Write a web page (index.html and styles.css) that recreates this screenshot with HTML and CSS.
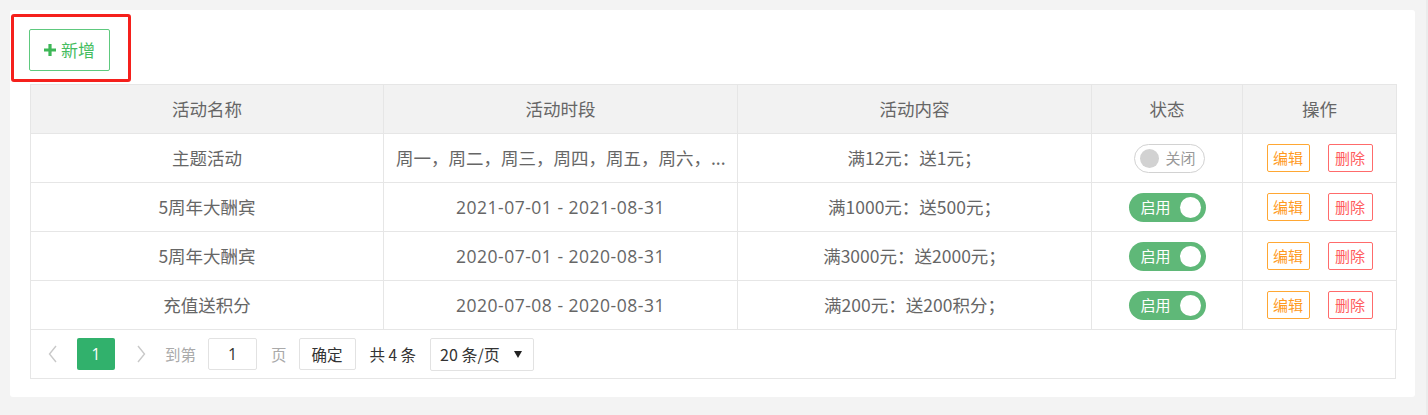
FILE: index.html
```html
<!DOCTYPE html>
<html lang="zh-CN">
<head>
<meta charset="utf-8">
<link rel="stylesheet" href="styles.css">
</head>
<body>
<div class="panel">
  <div class="toolbar">
    <div class="btn-add"><svg class="plus" viewBox="0 0 12 12" width="12" height="12"><path d="M4.4 0h3.2v4.4H12v3.2H7.6V12H4.4V7.6H0V4.4h4.4z" fill="#3db757"/></svg><span>新增</span></div>
  </div>
  <table class="grid">
    <colgroup>
      <col style="width:353px"><col style="width:354px"><col style="width:354px"><col style="width:151px"><col style="width:154px">
    </colgroup>
    <thead>
      <tr><th>活动名称</th><th>活动时段</th><th>活动内容</th><th>状态</th><th>操作</th></tr>
    </thead>
    <tbody>
      <tr>
        <td>主题活动</td>
        <td>周一，周二，周三，周四，周五，周六，...</td>
        <td>满12元：送1元；</td>
        <td><span class="switch off"><i class="knob"></i><em>关闭</em></span></td>
        <td><span class="op edit">编辑</span><span class="op del">删除</span></td>
      </tr>
      <tr>
        <td>5周年大酬宾</td>
        <td class="date">2021-07-01 - 2021-08-31</td>
        <td>满1000元：送500元；</td>
        <td><span class="switch on"><em>启用</em><i class="knob"></i></span></td>
        <td><span class="op edit">编辑</span><span class="op del">删除</span></td>
      </tr>
      <tr>
        <td>5周年大酬宾</td>
        <td class="date">2020-07-01 - 2020-08-31</td>
        <td>满3000元：送2000元；</td>
        <td><span class="switch on"><em>启用</em><i class="knob"></i></span></td>
        <td><span class="op edit">编辑</span><span class="op del">删除</span></td>
      </tr>
      <tr>
        <td>充值送积分</td>
        <td class="date">2020-07-08 - 2020-08-31</td>
        <td>满200元：送200积分；</td>
        <td><span class="switch on"><em>启用</em><i class="knob"></i></span></td>
        <td><span class="op edit">编辑</span><span class="op del">删除</span></td>
      </tr>
    </tbody>
  </table>
  <div class="pager">
    <span class="arrow"><svg viewBox="0 0 10 18" width="10" height="18"><path d="M8 1L1.5 9 8 17" fill="none" stroke="#c9c9c9" stroke-width="1.4"/></svg></span>
    <span class="cur">1</span>
    <span class="arrow next"><svg viewBox="0 0 10 18" width="10" height="18"><path d="M2 1l6.5 8L2 17" fill="none" stroke="#c9c9c9" stroke-width="1.4"/></svg></span>
    <span class="lbl">到第</span>
    <span class="inp">1</span>
    <span class="lbl ye">页</span>
    <span class="ok">确定</span>
    <span class="total">共 4 条</span>
    <span class="sel">20 条/页<svg viewBox="0 0 8 8" width="8" height="8"><path d="M0 1h8L4 8z" fill="#222"/></svg></span>
  </div>
</div>
<div class="scroll"></div>
</body>
</html>
```
FILE: styles.css
```css
html, body {
  margin: 0;
  padding: 0;
}
body {
  background: #f3f3f3;
  font-family: "Noto Sans CJK SC", "Noto Sans", sans-serif;
  font-size: 17.5px;
  color: #666;
  width: 1428px;
  height: 415px;
  overflow: hidden;
  position: relative;
}
.panel {
  margin: 10px 0 0 10px;
  width: 1405px;
  height: 387px;
  box-sizing: border-box;
  background: #fff;
  border-radius: 3px;
  padding: 0 19px 0 20px;
  overflow: hidden;
}
.toolbar {
  margin: 4px 0 2px -19px;
  width: 120px;
  height: 68px;
  box-sizing: border-box;
  border: 3px solid #f5201c;
  border-radius: 3px;
  padding: 12px 0 0 15px;
}
.btn-add {
  display: flex;
  align-items: center;
  justify-content: center;
  gap: 5px;
  width: 81px;
  height: 42px;
  box-sizing: border-box;
  border: 1px solid #5ec97e;
  border-radius: 2px;
  background: #fff;
  color: #45bd60;
  font-size: 17px;
  padding: 0 0 1px;
}
.plus {
  display: block;
}
.grid {
  border-collapse: collapse;
  table-layout: fixed;
  width: 1366px;
}
.grid th, .grid td {
  border: 1px solid #e6e6e6;
  height: 48px;
  padding: 0 12px;
  text-align: center;
  font-weight: normal;
  white-space: nowrap;
  overflow: hidden;
  line-height: 22px;
}
.grid th {
  background: #f2f2f2;
  color: #666;
}
.grid td.date {
  font-family: "Open Sans", "Noto Sans CJK SC", sans-serif;
  font-size: 17.5px;
  letter-spacing: 0.5px;
}
.switch {
  display: inline-flex;
  align-items: center;
  box-sizing: border-box;
  height: 29px;
  border-radius: 15px;
  vertical-align: middle;
}
.switch em {
  font-style: normal;
  font-size: 15px;
}
.switch.off {
  width: 71px;
  border: 1px solid #d2d2d2;
  padding: 0 6px 0 5px;
  gap: 7px;
  color: #999;
  margin-left: 4px;
}
.switch.off .knob {
  width: 19px;
  height: 19px;
  border-radius: 50%;
  background: #d2d2d2;
}
.switch.on {
  width: 77px;
  background: #5fb878;
  color: #fff;
  padding: 0 5px 0 12px;
  justify-content: space-between;
}
.switch.on .knob {
  width: 21px;
  height: 21px;
  border-radius: 50%;
  background: #fff;
}
.op {
  display: inline-flex;
  align-items: center;
  justify-content: center;
  box-sizing: border-box;
  height: 28px;
  padding: 0;
  border: 1px solid;
  border-radius: 2px;
  font-size: 15px;
  vertical-align: middle;
}
.op.edit {
  width: 43px;
  color: #ff9a1e;
  border-color: #ffa733;
}
.op.del {
  width: 45px;
  color: #ff5c5c;
  border-color: #ff6b6b;
  margin-left: 18px;
}
.pager {
  display: flex;
  align-items: center;
  height: 49px;
  box-sizing: border-box;
  width: 1366px;
  border: 1px solid #e6e6e6;
  border-top: none;
  padding: 0 0 0 17px;
  font-size: 15.5px;
}
.arrow {
  display: flex;
  align-items: center;
  width: 29px;
}
.arrow.next {
  width: 22px;
  justify-content: center;
  margin-left: 15px;
}
.cur {
  display: flex;
  align-items: center;
  justify-content: center;
  width: 38px;
  height: 32px;
  background: #31b16c;
  color: #fff;
  border-radius: 2px;
  font-family: "Open Sans", sans-serif;
  font-size: 15.5px;
}
.lbl {
  color: #aaa;
  margin-left: 13px;
}
.lbl.ye {
  margin-left: 14px;
}
.inp {
  display: flex;
  align-items: center;
  justify-content: center;
  width: 49px;
  height: 32px;
  box-sizing: border-box;
  border: 1px solid #e2e2e2;
  border-radius: 2px;
  margin-left: 12px;
  color: #333;
  font-family: "Open Sans", sans-serif;
  font-size: 16px;
}
.ok {
  display: flex;
  align-items: center;
  justify-content: center;
  width: 57px;
  height: 32px;
  box-sizing: border-box;
  border: 1px solid #e2e2e2;
  border-radius: 2px;
  margin-left: 12px;
  color: #333;
}
.total {
  margin-left: 14px;
  color: #333;
}
.sel {
  display: flex;
  align-items: center;
  justify-content: space-between;
  width: 104px;
  height: 33px;
  box-sizing: border-box;
  border: 1px solid #e2e2e2;
  border-radius: 2px;
  margin-left: 14px;
  padding: 0 11px 0 9px;
  color: #333;
  font-size: 16px;
}
.sel svg {
  display: block;
}
.scroll {
  position: absolute;
  right: 0;
  top: 0;
  width: 2px;
  height: 415px;
  background: #ebebeb;
}
```
